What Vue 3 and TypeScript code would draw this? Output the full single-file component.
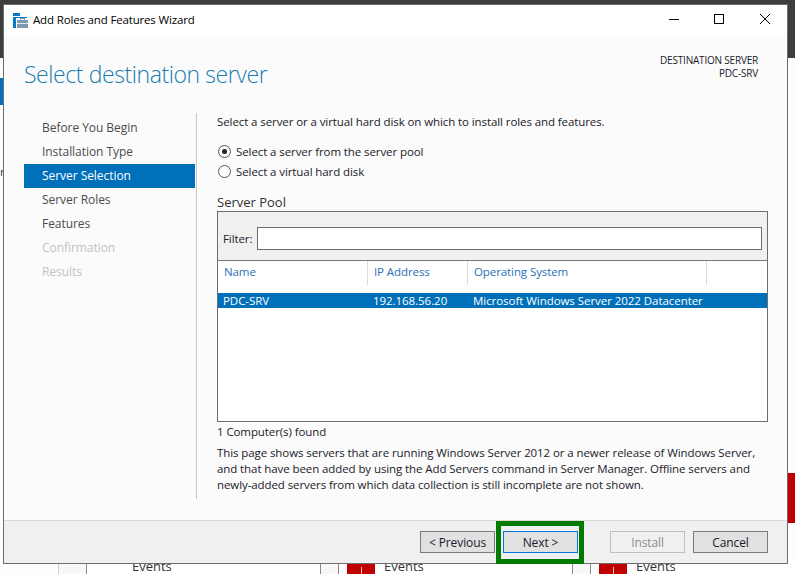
<script setup lang="ts">
interface PoolColumn {
  label: string;
  width: number;
}

const steps = [
  { label: "Before You Begin", state: "" },
  { label: "Installation Type", state: "" },
  { label: "Server Selection", state: "active" },
  { label: "Server Roles", state: "" },
  { label: "Features", state: "" },
  { label: "Confirmation", state: "off" },
  { label: "Results", state: "off" },
];

const columns: PoolColumn[] = [
  { label: "Name", width: 150 },
  { label: "IP Address", width: 100 },
  { label: "Operating System", width: 239 },
  { label: "", width: 60 },
];

const row = ["PDC-SRV", "192.168.56.20", "Microsoft Windows Server 2022 Datacenter"];
</script>

<template>
  <div class="desktop">
    <div class="bg-top" />
    <div class="bg-left-blue" />
    <span class="bg-letter">r</span>
    <div class="bg-right-red" />
    <div class="bg-strip">
      <div class="strip-a" />
      <div class="strip-b first" />
      <div class="strip-c"><span class="ev ev-first">Events</span></div>
      <div class="strip-b" />
      <div class="strip-c">
        <i class="alert" /><span class="ev">Events</span>
      </div>
      <div class="strip-b" />
      <div class="strip-c strip-last">
        <i class="alert" /><span class="ev">Events</span>
      </div>
    </div>

    <div class="window">
      <header class="titlebar">
        <svg class="app-icon" width="15" height="15" viewBox="0 0 15 15">
          <rect x="0" y="0" width="7" height="3" fill="#0a78c8" />
          <rect x="0" y="4" width="14" height="1" fill="#0a78c8" />
          <rect x="0" y="4" width="3" height="11" fill="#0a78c8" />
          <rect x="4" y="7" width="11" height="8" fill="#7d9aae" />
          <rect x="7.5" y="5.5" width="4" height="2" fill="none" stroke="#7d9aae" />
          <rect x="4" y="10" width="11" height="1" fill="#dfe8ee" />
        </svg>
        <span class="title-text">Add Roles and Features Wizard</span>
        <div class="win-controls">
          <svg width="10" height="10" viewBox="0 0 10 10"><path d="M0 5.5h10" stroke="#000" fill="none" /></svg>
          <svg width="10" height="10" viewBox="0 0 10 10"><rect x=".5" y=".5" width="9" height="9" stroke="#000" fill="none" /></svg>
          <svg class="close" width="10" height="10" viewBox="0 0 10 10"><path d="M0 0l10 10M10 0L0 10" stroke="#000" fill="none" /></svg>
        </div>
      </header>

      <div class="body">
        <div class="page-head">
          <h1>Select destination server</h1>
          <div class="dest">DESTINATION SERVER<br />PDC-SRV</div>
        </div>

        <div class="columns">
          <nav class="steps">
            <div v-for="s in steps" :key="s.label" class="step" :class="s.state">{{ s.label }}</div>
          </nav>

          <main class="content">
            <p class="intro">Select a server or a virtual hard disk on which to install roles and features.</p>
            <div class="radios">
              <label class="radio"><i class="dot on" />Select a server from the server pool</label>
              <label class="radio"><i class="dot" />Select a virtual hard disk</label>
            </div>
            <div class="pool-title">Server Pool</div>
            <section class="pool">
              <div class="filter">
                <span>Filter:</span>
                <div class="filter-input" />
              </div>
              <div class="grid-head">
                <div v-for="c in columns" :key="c.label" class="col" :style="{ width: c.width + 'px' }">{{ c.label }}</div>
              </div>
              <div class="grid-row">
                <div v-for="(cell, i) in row" :key="cell" class="cell" :style="{ width: columns[i].width + 'px' }">{{ cell }}</div>
              </div>
            </section>
            <div class="found">1 Computer(s) found</div>
            <p class="note">
              This page shows servers that are running Windows Server 2012 or a newer release of Windows Server,<br />
              and that have been added by using the Add Servers command in Server Manager. Offline servers and<br />
              newly-added servers from which data collection is still incomplete are not shown.
            </p>
          </main>
        </div>
      </div>

      <footer class="footer">
        <button class="btn">&lt; Previous</button>
        <div class="next-ring"><button class="btn primary">Next &gt;</button></div>
        <button class="btn disabled install">Install</button>
        <button class="btn">Cancel</button>
      </footer>
    </div>
  </div>
</template>

<style>
html,
body {
  margin: 0;
  overflow: hidden;
}
</style>

<style scoped>
.desktop {
  position: relative;
  width: 795px;
  height: 574px;
  overflow: hidden;
  background: #fdfdfd;
  font-family: "Open Sans", "Noto Sans", sans-serif;
  font-size: 11.5px;
  letter-spacing: -0.09px;
  color: #1a1a2a;
}

.bg-top {
  position: absolute;
  inset: 0 0 auto 0;
  height: 58px;
  background: #3d3d3d;
}

.bg-left-blue {
  position: absolute;
  left: 0;
  top: 78px;
  width: 3px;
  height: 27px;
  background: #0070bb;
}

.bg-letter {
  position: absolute;
  left: 0;
  top: 164px;
  color: #333;
}

.bg-right-red {
  position: absolute;
  right: 0;
  top: 473px;
  width: 7px;
  height: 50px;
  background: #c00000;
}

.bg-strip {
  position: absolute;
  left: 0;
  right: 0;
  top: 559px;
  height: 15px;
  display: flex;
  background: #fff;
}

.strip-a {
  width: 59px;
  border-right: 1px solid #d0d0d0;
  box-sizing: border-box;
  background: #fdfdfd;
}

.strip-b {
  width: 18px;
  background: #f8f8f8;
  border-right: 1px solid #8a8a8a;
  box-sizing: border-box;
}

.strip-b.first {
  width: 28px;
}

.strip-c {
  width: 234px;
  display: flex;
  align-items: flex-end;
  border-right: 1px solid #8a8a8a;
  box-sizing: border-box;
  padding-left: 8px;
  font-size: 13px;
  letter-spacing: 0;
}

.strip-last {
  width: auto;
  flex: 1;
  border-right: 0;
}

.ev {
  line-height: 16px;
  margin-left: 9px;
  color: #333;
}

.ev-first {
  margin-left: 37px;
}

.alert {
  position: relative;
  width: 28px;
  height: 10px;
  background: #c00000;
}

.alert::after {
  content: "";
  position: absolute;
  left: 14px;
  top: 3px;
  width: 1px;
  height: 7px;
  background: #f3c9a0;
}

.window {
  position: absolute;
  left: 3px;
  top: 4px;
  width: 785px;
  height: 560px;
  box-sizing: border-box;
  border: 1px solid #6d6d6d;
  background: #fbfbfb;
  display: flex;
  flex-direction: column;
}

.titlebar {
  height: 30px;
  flex: none;
  background: #fff;
  display: flex;
  align-items: center;
  padding-left: 9px;
}

.app-icon {
  flex: none;
  margin-right: 5px;
}

.title-text {
  margin-bottom: 2px;
  font-size: 11.5px;
  letter-spacing: -0.16px;
  color: #000;
}

.win-controls {
  margin-left: auto;
  margin-bottom: 2px;
  display: flex;
  gap: 35px;
  padding-right: 17px;
}

.close {
  margin-left: 1px;
}

.body {
  flex: 1;
  display: flex;
  flex-direction: column;
  min-height: 0;
}

.page-head {
  height: 78px;
  flex: none;
  display: flex;
  justify-content: space-between;
  padding: 0 29px 0 20px;
}

h1 {
  margin: 23px 0 0;
  font-size: 23px;
  line-height: 32px;
  font-weight: 300;
  letter-spacing: -0.42px;
  color: #1a7cb0;
}

.dest {
  margin-top: 19px;
  font-size: 10px;
  line-height: 13px;
  text-align: right;
  letter-spacing: -0.2px;
}

.columns {
  display: flex;
  flex: 1;
  min-height: 0;
}

.steps {
  width: 171px;
  margin-left: 20px;
  padding-top: 3px;
  flex: none;
}

.step {
  height: 24px;
  line-height: 24px;
  padding-left: 18px;
  font-size: 12px;
  letter-spacing: -0.05px;
  color: #4b4b4b;
}

.step.active {
  background: #0070bb;
  color: #fff;
}

.step.off {
  color: #c2c2c2;
}

.content {
  margin-left: 1px;
  height: 386px;
  box-sizing: border-box;
  width: 572px;
  border-left: 1px solid #c6c6c6;
  padding-left: 20px;
  padding-top: 1px;
}

.intro {
  margin: 0;
  line-height: 16px;
}

.radios {
  margin-top: 13px;
  display: flex;
  flex-direction: column;
  gap: 4px;
}

.radio {
  display: flex;
  align-items: center;
  gap: 5px;
  height: 16px;
}

.dot {
  width: 11px;
  height: 11px;
  border: 1px solid #555;
  border-radius: 50%;
  background: #fff;
  display: grid;
  place-items: center;
  margin-left: 1px;
}

.dot.on::after {
  content: "";
  width: 5px;
  height: 5px;
  border-radius: 50%;
  background: #222;
}

.pool-title {
  margin-top: 15px;
  font-size: 13px;
  line-height: 17px;
  letter-spacing: 0;
  color: #333;
}

.pool {
  width: 551px;
  height: 211px;
  box-sizing: border-box;
  border: 1px solid #6d6d6d;
  background: #fff;
}

.filter {
  height: 49px;
  box-sizing: border-box;
  background: #f0f0f0;
  border-bottom: 1px solid #7a7a7a;
  display: flex;
  align-items: center;
  padding: 5px 5px 0 5px;
  gap: 5px;
}

.filter-input {
  flex: 1;
  height: 23px;
  box-sizing: border-box;
  border: 1px solid #6d6d6d;
  background: #fff;
}

.grid-head {
  display: flex;
  height: 24px;
  margin-bottom: 8px;
}

.col {
  box-sizing: border-box;
  padding-left: 6px;
  line-height: 22px;
  color: #2a6fb8;
  border-right: 1px solid #dcdcdc;
}

.col:last-child {
  border-right: 0;
}

.grid-row {
  display: flex;
  height: 15px;
  line-height: 15px;
  background: #0070bb;
  color: #fff;
  letter-spacing: -0.05px;
}

.cell {
  box-sizing: border-box;
  padding-left: 5px;
  white-space: nowrap;
}

.found {
  margin-top: 2px;
  line-height: 16px;
}

.note {
  margin: 5px 0 0;
  line-height: 16px;
  white-space: nowrap;
}

.footer {
  height: 43px;
  flex: none;
  box-sizing: border-box;
  background: #f0f0f0;
  border-top: 1px solid #d9d9d9;
  display: flex;
  align-items: center;
  padding-left: 416px;
}

.btn {
  width: 75px;
  height: 22px;
  flex: none;
  box-sizing: border-box;
  padding: 0;
  border: 1px solid #7a7a7a;
  background: #e1e1e1;
  font: inherit;
  font-size: 12px;
  letter-spacing: -0.1px;
  color: #1a1a2a;
}

.btn.primary {
  border-color: #0078d7;
}

.btn.disabled {
  border-color: #bfbfbf;
  background: #f0f0f0;
  color: #8c8c8c;
}

.install {
  margin: 0 8px 0 26px;
}

.next-ring {
  box-sizing: border-box;
  width: 88px;
  height: 43px;
  margin: -1px 0 -1px 1px;
  border: 5px solid #007a00;
  display: flex;
  align-items: center;
  padding-left: 2px;
}
</style>
